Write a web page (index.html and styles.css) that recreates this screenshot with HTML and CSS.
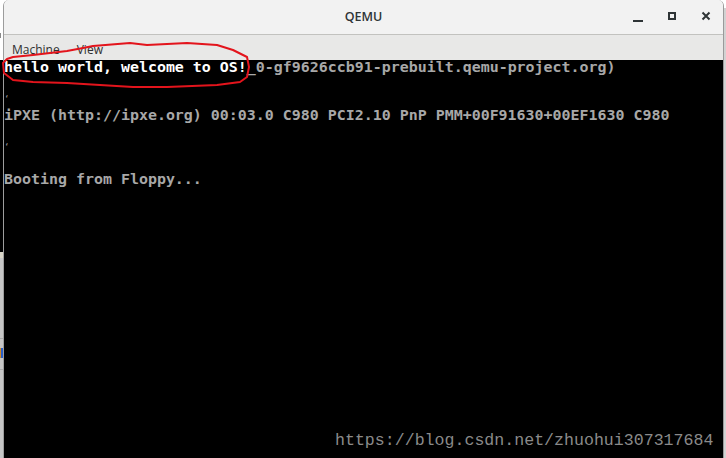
FILE: index.html
```html
<!DOCTYPE html>
<html lang="en">
<head>
    <meta charset="UTF-8">
    <meta name="viewport" content="width=device-width, initial-scale=1.0">
    <title>QEMU</title>
    <link rel="stylesheet" href="styles.css">
</head>
<body>
    <!-- strip of the desktop left of the window -->
    <div class="left-edge">
        <div class="edge-top"><span class="edge-tick"></span></div>
        <div class="edge-black"></div>
        <div class="edge-band"></div>
        <div class="edge-rest">
            <span class="edge-line"></span>
            <span class="edge-icon"></span>
            <span class="edge-line"></span>
        </div>
    </div>

    <div class="window">
        <div class="titlebar">
            <div></div>
            <div class="title">QEMU</div>
            <div class="controls">
                <span class="ctl ctl-min"><i></i></span>
                <span class="ctl ctl-max"><i></i></span>
                <span class="ctl ctl-close">
                    <svg width="10" height="10" viewBox="0 0 10 10">
                        <path d="M1.5 1.5 L8.5 8.5 M8.5 1.5 L1.5 8.5" stroke="#2e3436" stroke-width="2"/>
                    </svg>
                </span>
            </div>
        </div>

        <div class="menubar">
            <span class="menu-item">Machine</span>
            <span class="menu-item">View</span>
        </div>

        <div class="screen">
<pre class="console"><span class="hi">hello world, welcome to OS!</span>_0-gf9626ccb91-prebuilt.qemu-project.org)

<span class="stray">‘</span>
iPXE (http://ipxe.org) 00:03.0 C980 PCI2.10 PnP PMM+00F91630+00EF1630 C980

<span class="stray">‘</span>

Booting from Floppy...</pre>
            <div class="watermark">https://blog.csdn.net/zhuohui307317684</div>
        </div>
    </div>

    <div class="right-edge"></div>

    <!-- hand-drawn red mark over the first console line -->
    <svg class="mark" width="260" height="95" viewBox="0 0 260 95">
        <polyline fill="none" stroke="#e3141c" stroke-width="2" stroke-linejoin="round" stroke-linecap="round"
            points="7,59 13,57 33,55 50,53 67,51 83,48 93,46 130,43 147,45 167,44 187,43 217,45 233,50 247,57 249,67 247,77 240,82 217,85 167,87 133,87 100,85 67,83 33,82 13,80 4,73 3,63 7,59"/>
    </svg>
</body>
</html>
```

FILE: styles.css
```css
* {
    margin: 0;
    padding: 0;
    box-sizing: border-box;
}

body {
    width: 726px;
    height: 458px;
    overflow: hidden;
    display: flex;
    position: relative;
    background-color: #ffffff;
    font-family: 'Open Sans', 'Noto Sans', sans-serif;
}

/* desktop edges */
.left-edge {
    width: 3px;
    display: flex;
    flex-direction: column;
}

.edge-top {
    height: 60px;
    background-color: #ffffff;
    position: relative;
}

.edge-tick {
    position: absolute;
    left: 0;
    top: 33px;
    width: 1px;
    height: 5px;
    background-color: #8a8a8a;
}

.edge-black {
    height: 192px;
    background-color: #000000;
}

.edge-band {
    height: 6px;
    background-color: #d8d5c7;
}

.edge-rest {
    flex: 1;
    background-color: #c6c6c6;
    display: flex;
    flex-direction: column;
    padding-top: 80px;
}

.edge-line {
    height: 1px;
    background-color: #a9a9a9;
}

.edge-icon {
    height: 10px;
    margin: 9px 0 11px;
    background: linear-gradient(90deg, #d08a2a 0 1px, #2a5fc8 1px 3px);
}

.right-edge {
    width: 2px;
    background: linear-gradient(#ffffff 0 8px, #d2d2d2 8px);
}

/* window */
.window {
    width: 721px;
    display: flex;
    flex-direction: column;
    border-left: 1px solid #9d9d9d;
    border-right: 1px solid #9a9a9a;
    border-radius: 6px 6px 0 0;
    overflow: hidden;
}

.titlebar {
    height: 35px;
    display: grid;
    grid-template-columns: 1fr auto 1fr;
    align-items: center;
    background-color: #f2f2f2;
    border-bottom: 1px solid #c2c2bf;
}

.title {
    font-size: 12.5px;
    font-weight: 600;
    color: #2e3436;
    padding-bottom: 2px;
}

.controls {
    display: flex;
    justify-content: flex-end;
    height: 100%;
}

.ctl {
    width: 34px;
    display: flex;
    align-items: center;
    justify-content: center;
}

.ctl-min i {
    width: 10px;
    height: 2px;
    margin-top: 8px;
    background-color: #2e3436;
}

.ctl-max i {
    width: 8px;
    height: 8px;
    border: 2px solid #2e3436;
    margin-bottom: 2px;
}

.ctl-close svg {
    margin-bottom: 2px;
}

.menubar {
    height: 25px;
    display: flex;
    align-items: center;
    gap: 17px;
    padding-left: 8px;
    padding-top: 3px;
    background-color: #e8e8e7;
}

.menu-item {
    font-size: 12px;
    color: #2f2f2f;
}

/* console */
.screen {
    flex: 1;
    position: relative;
    background-color: #000000;
}

.console {
    margin-top: -1px;
    font-family: 'DejaVu Sans Mono', 'Liberation Mono', monospace;
    font-weight: bold;
    font-size: 14.95px;
    line-height: 16px;
    color: #a8a8a8;
}

.hi {
    color: #ffffff;
}

.stray {
    vertical-align: top;
    font-size: 9px;
    line-height: 16px;
    font-weight: normal;
    color: #9a9a9a;
}

.watermark {
    position: absolute;
    left: 331px;
    top: 371px;
    font-family: 'Liberation Mono', monospace;
    font-size: 16.6px;
    line-height: 20px;
    color: #8a8a8a;
}

.mark {
    position: absolute;
    left: 0;
    top: 0;
}
```
